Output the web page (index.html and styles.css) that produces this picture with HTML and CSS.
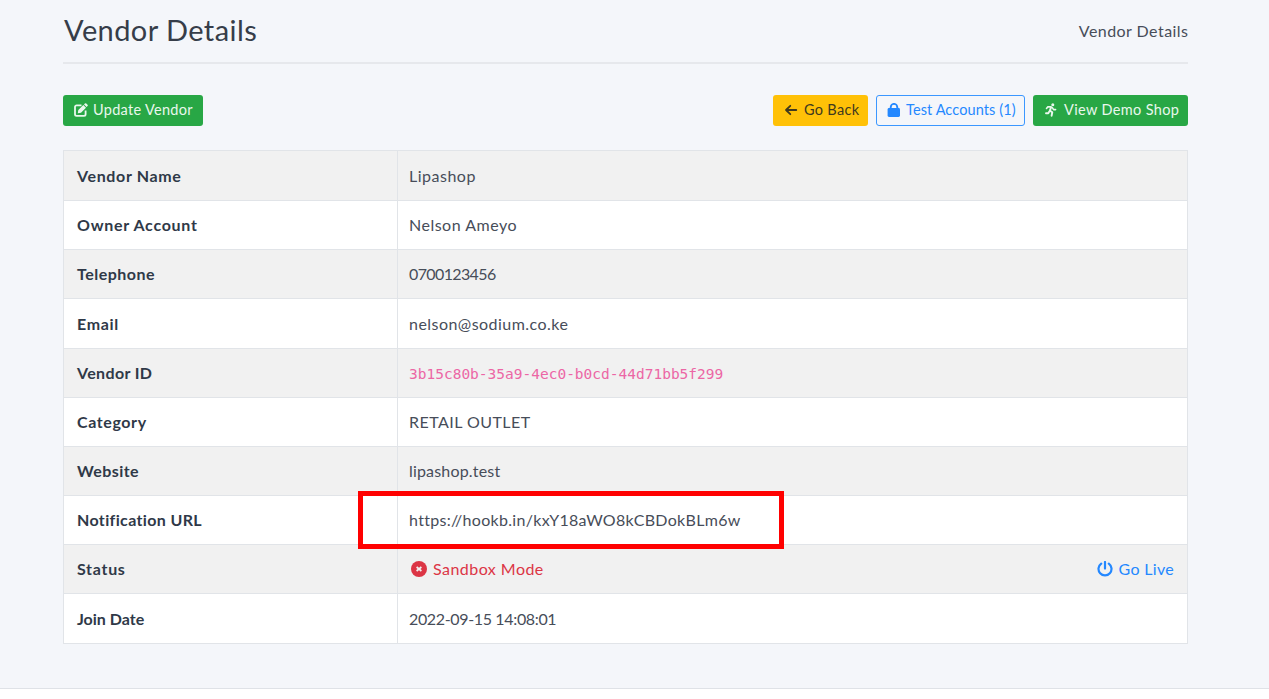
FILE: index.html
```html
<!DOCTYPE html>
<html lang="en">
<head>
<meta charset="utf-8">
<title>Vendor Details</title>
<link rel="stylesheet" href="styles.css">
</head>
<body>
<main class="page">
  <header class="page-header">
    <h1 class="title">Vendor Details</h1>
    <span class="crumb">Vendor Details</span>
  </header>
  <div class="toolbar">
    <a class="btn btn-success update"><svg class="icon" viewBox="0 0 14 14"><path d="M7.5 2.4H2.6A1.6 1.6 0 0 0 1 4v7.2a1.6 1.6 0 0 0 1.6 1.6h7.4a1.6 1.6 0 0 0 1.6-1.6V7.6" fill="none" stroke="currentColor" stroke-width="1.8"/><path d="M3.8 10.3l.5-3.2 5-5 2.7 2.7-5 5zM10 1.4l.9-.9q.7-.7 1.4 0l1.2 1.2q.7.7 0 1.4l-.9.9z" fill="currentColor"/></svg><span>Update Vendor</span></a>
    <div class="actions">
      <a class="btn btn-warning back"><svg class="icon" viewBox="0 0 14 14"><path d="M12.3 7H2M6.3 2.8L2 7l4.3 4.2" fill="none" stroke="currentColor" stroke-width="1.8" stroke-linecap="round" stroke-linejoin="round"/></svg><span>Go Back</span></a>
      <a class="btn btn-outline accounts"><svg class="icon" viewBox="0 0 14 14"><path d="M3.7 6V4.2a3.3 3.3 0 0 1 6.6 0V6" fill="none" stroke="currentColor" stroke-width="1.9"/><rect x=".6" y="5" width="12.4" height="9" rx="1.4" fill="currentColor"/></svg><span>Test Accounts (1)</span></a>
      <a class="btn btn-success shop"><svg class="icon" viewBox="0 0 14 14"><circle cx="8.8" cy="1.7" r="1.5" fill="currentColor"/><path d="M2.5 5.4l1.2-1.5 3-.2 1.8 1.2 1.1 1.7h2" fill="none" stroke="currentColor" stroke-width="1.6" stroke-linecap="round" stroke-linejoin="round"/><path d="M7 4.6L5.8 7.6 8.3 9.3 7.6 12.7M5.2 8.6l-.9 1.6H2" fill="none" stroke="currentColor" stroke-width="1.9" stroke-linecap="round" stroke-linejoin="round"/></svg><span>View Demo Shop</span></a>
    </div>
  </div>
  <div class="details">
    <table class="table">
      <tr class="tall"><th><span class="k1">Vendor Name</span></th><td><span class="v1">Lipashop</span></td></tr>
      <tr><th><span class="k2">Owner Account</span></th><td><span class="v2">Nelson Ameyo</span></td></tr>
      <tr><th><span class="k3">Telephone</span></th><td><span class="v3">0700123456</span></td></tr>
      <tr class="tall"><th><span class="k4">Email</span></th><td><span class="v4">nelson@sodium.co.ke</span></td></tr>
      <tr><th><span class="k5">Vendor ID</span></th><td class="id"><code>3b15c80b-35a9-4ec0-b0cd-44d71bb5f299</code></td></tr>
      <tr><th><span class="k6">Category</span></th><td><span class="v6">RETAIL OUTLET</span></td></tr>
      <tr><th><span class="k7">Website</span></th><td><span class="v7">lipashop.test</span></td></tr>
      <tr><th><span class="k8">Notification URL</span></th><td><span class="v8">https://hookb.in/kxY18aWO8kCBDokBLm6w</span></td></tr>
      <tr><th><span class="k9">Status</span></th><td><div class="status"><span class="mode"><svg class="icon-lg" viewBox="0 0 16 16"><circle cx="8" cy="8" r="8" fill="currentColor"/><path d="M5.6 6l4.8 4M10.4 6l-4.8 4" stroke="#f1f1f1" stroke-width="1.7"/></svg><span class="v9">Sandbox Mode</span></span><a class="live"><svg class="icon-lg" viewBox="0 0 16 16"><path d="M4.2 2.6a6.5 6.5 0 1 0 7.6 0M8 1v6.6" fill="none" stroke="currentColor" stroke-width="2.2" stroke-linecap="round"/></svg><span class="golive">Go Live</span></a></div></td></tr>
      <tr class="tall"><th><span class="k10">Join Date</span></th><td><span class="v10">2022-09-15 14:08:01</span></td></tr>
    </table>
    <div class="highlight"></div>
  </div>
</main>
<footer class="footer"></footer>
</body>
</html>
```
FILE: styles.css
```css
* { box-sizing: border-box; }
body { margin: 0; height: 699px; overflow: hidden; display: flex; flex-direction: column; background: #f4f6fa; color: #474d59; font: 16px/24px Lato, sans-serif; }
.page { height: 688px; padding: 0 81px 0 63px; }
.page-header { height: 64px; padding-bottom: 1px; display: flex; justify-content: space-between; align-items: center; border-bottom: 2px solid #e6e8ec; }
.title { margin: 0 0 2px 1px; font-size: 29px; font-weight: 400; line-height: 40px; letter-spacing: .42px; color: #363d49; }
.crumb { letter-spacing: .45px; margin-right: -.45px; }
.toolbar { display: flex; justify-content: space-between; padding-top: 31px; height: 86px; }
.actions { display: flex; gap: 8px; }
.btn { height: 31px; display: flex; align-items: center; gap: 6px; padding: 0 0 1px 10px; border: 1px solid transparent; border-radius: 3px; font-size: 14.5px; letter-spacing: .3px; white-space: nowrap; }
.btn-success { background: #28a745; color: #eaf7ed; }
.btn-warning { background: #ffc107; color: #40391f; }
.btn-outline { border-color: #3b97ff; color: #2488ff; }
.icon { width: 14px; height: 14px; flex: none; }
.update { width: 140px; gap: 5px; }
.back { width: 95px; }
.accounts { width: 149px; gap: 5px; letter-spacing: .1px; }
.shop { width: 155px; letter-spacing: .35px; }
.details { position: relative; }
.table { width: 1125px; border-collapse: collapse; table-layout: fixed; background: #fff; }
.table tr { height: 49px; }
.table .tall { height: 50px; }
.table th, .table td { border: 1px solid #e1e4e8; padding: 0 13px; text-align: left; vertical-align: middle; white-space: nowrap; }
.table td { padding-left: 11px; }
.table th { width: 334px; color: #2f3948; font-weight: 700; }
.table tr:nth-child(odd) { background: #f1f1f1; }
code { font: 14.5px/20px "DejaVu Sans Mono", monospace; color: #ec66a5; }
.k1, .k4 { letter-spacing: .64px; }
.k2, .k9 { letter-spacing: .7px; }
.k3 { letter-spacing: .5px; }
.k5, .k8 { letter-spacing: .36px; }
.k6 { letter-spacing: .6px; }
.k7 { letter-spacing: .42px; }
.v1, .v2 { letter-spacing: .5px; }
.v3 { letter-spacing: -.62px; }
.v4, .v6, .v9 { letter-spacing: .46px; }
.v7 { letter-spacing: .18px; }
.v8 { letter-spacing: .31px; }
.v10 { letter-spacing: -.35px; }
.golive { letter-spacing: .3px; }
.status { display: flex; justify-content: space-between; }
.mode, .live { display: flex; align-items: center; gap: 6px; }
.mode { color: #dc3545; padding-left: 2px; }
.live { color: #2488ff; }
.icon-lg { width: 16px; height: 16px; }
.highlight { position: absolute; left: 295px; top: 341px; width: 426px; height: 58px; border: 5px solid #f00; }
.footer { height: 11px; background: #fff; border-top: 1px solid #dfe2e7; }
```
